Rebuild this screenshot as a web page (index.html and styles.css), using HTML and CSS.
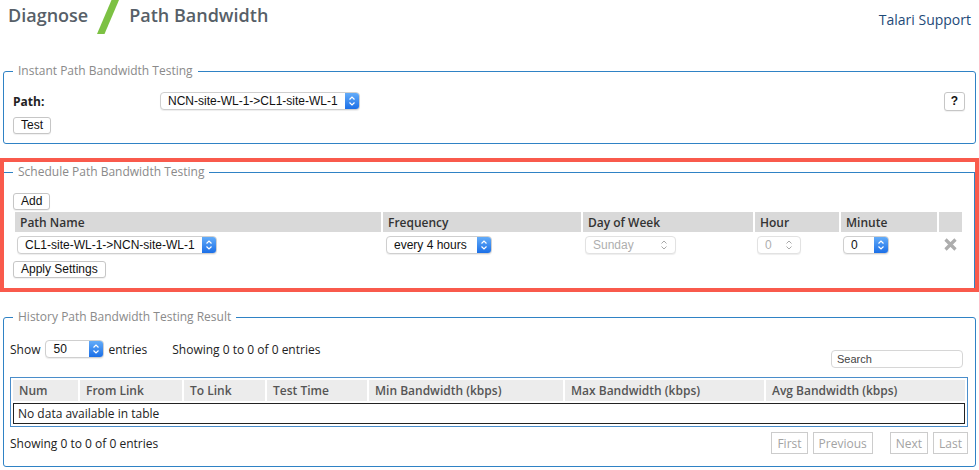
FILE: index.html
```html
<!DOCTYPE html>
<html lang="en">
<head>
    <meta charset="UTF-8">
    <meta name="viewport" content="width=device-width, initial-scale=1.0">
    <title>Path Bandwidth</title>
    <link rel="stylesheet" href="styles.css">
</head>
<body>
    <div class="header">
        <h1 class="crumbs">
            <span>Diagnose</span>
            <svg class="slash" width="22" height="34" viewBox="0 0 22 34"><polygon points="0,34 7.5,34 22,0 14.5,0" fill="#7cc143"/></svg>
            <span>Path Bandwidth</span>
        </h1>
        <a class="support" href="#">Talari Support</a>
    </div>

    <fieldset class="box">
        <legend>Instant Path Bandwidth Testing</legend>
        <div class="path-row">
            <label class="path-label" for="ipath">Path:</label>
            <div class="sel w-ipath">
                <select id="ipath"><option>NCN-site-WL-1-&gt;CL1-site-WL-1</option></select>
                <span class="step"><svg width="8" height="12" viewBox="0 0 8 12"><path d="M1.5 4.5 L4 2 L6.5 4.5 M1.5 7.5 L4 10 L6.5 7.5" fill="none" stroke="#fff" stroke-width="1.2"/></svg></span>
            </div>
            <button type="button" class="btn help">?</button>
        </div>
        <button type="button" class="btn test">Test</button>
    </fieldset>

    <div class="highlight">
        <fieldset class="box schedule">
            <legend>Schedule Path Bandwidth Testing</legend>
            <button type="button" class="btn">Add</button>
            <table class="sched-table">
                <colgroup>
                    <col style="width:366px"><col style="width:198px"><col style="width:170px"><col style="width:84px"><col style="width:96px"><col style="width:23px">
                </colgroup>
                <thead>
                    <tr><th>Path Name</th><th>Frequency</th><th>Day of Week</th><th>Hour</th><th>Minute</th><th></th></tr>
                </thead>
                <tbody>
                    <tr>
                        <td>
                            <div class="sel w-path">
                                <select><option>CL1-site-WL-1-&gt;NCN-site-WL-1</option></select>
                                <span class="step"><svg width="8" height="12" viewBox="0 0 8 12"><path d="M1.5 4.5 L4 2 L6.5 4.5 M1.5 7.5 L4 10 L6.5 7.5" fill="none" stroke="#fff" stroke-width="1.2"/></svg></span>
                            </div>
                        </td>
                        <td class="freq">
                            <div class="sel w-freq">
                                <select><option>every 4 hours</option></select>
                                <span class="step"><svg width="8" height="12" viewBox="0 0 8 12"><path d="M1.5 4.5 L4 2 L6.5 4.5 M1.5 7.5 L4 10 L6.5 7.5" fill="none" stroke="#fff" stroke-width="1.2"/></svg></span>
                            </div>
                        </td>
                        <td>
                            <div class="sel off w-day">
                                <select disabled><option>Sunday</option></select>
                                <span class="step"><svg width="8" height="12" viewBox="0 0 8 12"><path d="M1.5 4.5 L4 2 L6.5 4.5 M1.5 7.5 L4 10 L6.5 7.5" fill="none" stroke="#a8a8a8" stroke-width="1"/></svg></span>
                            </div>
                        </td>
                        <td>
                            <div class="sel off w-hour">
                                <select disabled><option>0</option></select>
                                <span class="step"><svg width="8" height="12" viewBox="0 0 8 12"><path d="M1.5 4.5 L4 2 L6.5 4.5 M1.5 7.5 L4 10 L6.5 7.5" fill="none" stroke="#a8a8a8" stroke-width="1"/></svg></span>
                            </div>
                        </td>
                        <td>
                            <div class="sel w-min">
                                <select><option>0</option></select>
                                <span class="step"><svg width="8" height="12" viewBox="0 0 8 12"><path d="M1.5 4.5 L4 2 L6.5 4.5 M1.5 7.5 L4 10 L6.5 7.5" fill="none" stroke="#fff" stroke-width="1.2"/></svg></span>
                            </div>
                        </td>
                        <td class="del">
                            <svg width="13" height="13" viewBox="0 0 13 13"><path d="M1.5 1.5 L11.5 11.5 M11.5 1.5 L1.5 11.5" stroke="#adadad" stroke-width="3.2"/></svg>
                        </td>
                    </tr>
                </tbody>
            </table>
            <button type="button" class="btn apply">Apply Settings</button>
        </fieldset>
    </div>

    <fieldset class="box history">
        <legend>History Path Bandwidth Testing Result</legend>
        <div class="hist-top">
            <div class="length">
                <span>Show</span>
                <div class="sel w-show">
                    <select><option>50</option></select>
                    <span class="step"><svg width="8" height="12" viewBox="0 0 8 12"><path d="M1.5 4.5 L4 2 L6.5 4.5 M1.5 7.5 L4 10 L6.5 7.5" fill="none" stroke="#fff" stroke-width="1.2"/></svg></span>
                </div>
                <span>entries</span>
                <span class="info">Showing 0 to 0 of 0 entries</span>
            </div>
            <input type="text" class="search" placeholder="Search">
        </div>
        <div class="table-wrap">
            <table class="hist-table">
                <colgroup>
                    <col style="width:65px"><col style="width:102px"><col style="width:81px"><col style="width:100px"><col style="width:194px"><col style="width:199px"><col>
                </colgroup>
                <thead>
                    <tr><th>Num</th><th>From Link</th><th>To Link</th><th>Test Time</th><th>Min Bandwidth (kbps)</th><th>Max Bandwidth (kbps)</th><th>Avg Bandwidth (kbps)</th></tr>
                </thead>
                <tbody>
                    <tr><td colspan="7" class="empty">No data available in table</td></tr>
                </tbody>
            </table>
        </div>
        <div class="hist-foot">
            <span>Showing 0 to 0 of 0 entries</span>
            <div class="pager">
                <button type="button" class="pg">First</button>
                <button type="button" class="pg">Previous</button>
                <button type="button" class="pg next">Next</button>
                <button type="button" class="pg">Last</button>
            </div>
        </div>
    </fieldset>
</body>
</html>
```

FILE: styles.css
```css
body {
    margin: 0;
    font-family: "Open Sans", Arial, sans-serif;
    font-size: 12px;
    color: #222;
    background-color: #ffffff;
}
.header {
    display: flex;
    justify-content: space-between;
    align-items: flex-start;
    height: 63px;
}
.crumbs {
    display: flex;
    align-items: flex-start;
    margin: 0;
    padding: 3px 0 0 8px;
    font-size: 18px;
    font-weight: 600;
    line-height: 24px;
    color: #575f68;
}
.crumbs .slash {
    margin: -3px 10px 0 9px;
}
.support {
    margin: 10px 8px 0 0;
    font-size: 14px;
    line-height: 19px;
    color: #1e4a78;
    text-decoration: none;
}
.box {
    margin: 0 3px;
    padding: 12px 10px 9px 9px;
    border: 1px solid #2f82c5;
    border-radius: 3px;
    min-width: 0;
}
.box legend {
    padding: 0 5px;
    font-size: 12px;
    line-height: 16px;
    color: #8a8a8a;
}
.path-row {
    display: flex;
    align-items: center;
    height: 20px;
}
.path-label {
    width: 147px;
    font-weight: bold;
    color: #222;
}
.btn {
    display: block;
    height: 17px;
    padding: 0 7px;
    background-color: #ffffff;
    border: 1px solid #c6c6c6;
    border-radius: 3px;
    box-shadow: 0 1px 1px rgba(0, 0, 0, 0.06);
    font-family: "Liberation Sans", Arial, sans-serif;
    font-size: 12px;
    line-height: 15px;
    color: #111;
    cursor: pointer;
}
.btn.help {
    margin-left: auto;
    width: 21px;
    height: 19px;
    padding: 0;
    font-weight: bold;
}
.btn.test {
    margin-top: 6px;
}
.sel {
    display: flex;
    height: 18px;
    box-sizing: border-box;
    background-color: #ffffff;
    border: 1px solid #cfcfcf;
    border-radius: 4px;
    box-shadow: 0 1px 1px rgba(0, 0, 0, 0.07);
    overflow: hidden;
}
.sel select {
    flex: 1;
    min-width: 0;
    height: 100%;
    padding: 0 0 0 7px;
    border: none;
    background: transparent;
    -webkit-appearance: none;
    appearance: none;
    font-family: "Liberation Sans", Arial, sans-serif;
    font-size: 12px;
    color: #111;
    outline: none;
}
.sel .step {
    display: flex;
    align-items: center;
    justify-content: center;
    width: 14px;
    background: linear-gradient(#63acf9, #1b6fe7);
}
.sel.off {
    border-color: #e2e2e2;
}
.sel.off select {
    color: #8c8c8c;
}
.sel.off .step {
    width: 22px;
    background: none;
}
.w-ipath { width: 200px; }
.w-path { width: 200px; }
.w-freq { width: 106px; }
.w-day { width: 91px; }
.w-hour { width: 44px; }
.w-min { width: 46px; }
.w-show { width: 59px; }

.highlight {
    margin-top: 14px;
    border: 4px solid #f95a4c;
}
.schedule {
    margin: 2px 0 0 0;
    padding: 13px 10px 10px 9px;
    border-left: none;
    border-bottom: none;
    border-radius: 0;
}
.sched-table {
    width: 951px;
    table-layout: fixed;
    border-spacing: 2px;
    margin-left: 0;
}
.sched-table th {
    height: 20px;
    padding: 0 5px;
    background-color: #d9d9d9;
    font-weight: 600;
    font-size: 12px;
    color: #333;
    text-align: left;
}
.sched-table td {
    height: 21px;
    padding: 0 0 0 2px;
}
.sched-table td.freq {
    padding-left: 3px;
}
.sched-table td.del {
    padding: 0;
    text-align: center;
}
.sched-table td.del svg {
    display: block;
    margin: 0 auto;
}
.btn.apply {
    margin-top: 4px;
}

.history {
    margin-top: 17px;
    padding: 15px 7px 12px 6px;
}
.history legend {
    margin-left: 3px;
}
.hist-top {
    display: flex;
    justify-content: space-between;
    align-items: flex-start;
    height: 28px;
}
.length {
    display: flex;
    align-items: center;
    height: 18px;
    color: #222;
}
.length .sel {
    margin: 0 4px 0 5px;
}
.length .info {
    margin-left: 25px;
}
.search {
    margin: 10px 5px 0 0;
    width: 132px;
    height: 18px;
    box-sizing: border-box;
    padding: 0 5px;
    border: 1px solid #d6d6d6;
    border-radius: 4px;
    font-family: "Liberation Sans", Arial, sans-serif;
    font-size: 11px;
}
.search::placeholder {
    color: #444;
}
.table-wrap {
    margin-top: 9px;
    border: 1px solid #4a8dca;
}
.hist-table {
    width: 100%;
    table-layout: fixed;
    border-spacing: 2px;
}
.hist-table th {
    height: 21px;
    padding: 0 6px;
    background-color: #ececec;
    font-weight: 600;
    font-size: 12px;
    color: #555;
    text-align: left;
    white-space: nowrap;
}
.hist-table td.empty {
    height: 21px;
    box-sizing: border-box;
    padding: 0 4px;
    border: 1px solid #222;
    color: #222;
}
.hist-foot {
    display: flex;
    justify-content: space-between;
    align-items: center;
    margin-top: 5px;
}
.pager {
    display: flex;
    gap: 5px;
}
.pg {
    height: 22px;
    padding: 0 5px;
    background-color: #ffffff;
    border: 1px solid #cccccc;
    font-family: "Open Sans", Arial, sans-serif;
    font-size: 12px;
    color: #a3a3a3;
}
.pg.next {
    margin-left: 12px;
}
```
